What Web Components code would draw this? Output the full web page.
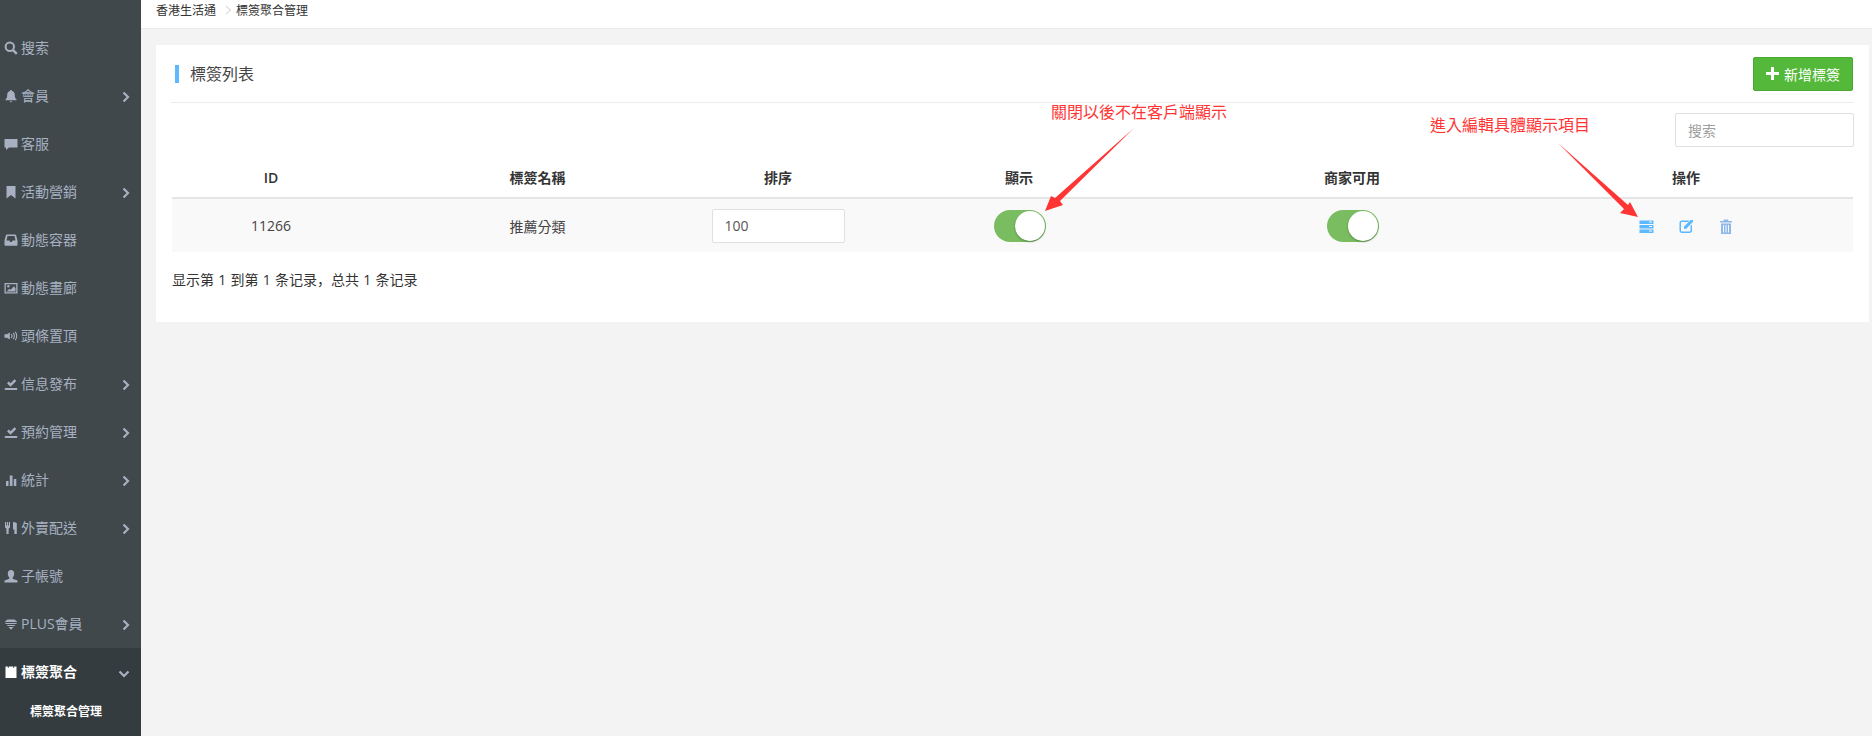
<!DOCTYPE html>
<html lang="zh-Hant">
<head>
<meta charset="utf-8">
<title>標簽聚合管理</title>
<style>
html, body { margin: 0; height: 100%; overflow: hidden; background: #f3f3f3; }
body { font-family: "Open Sans", "Noto Sans CJK TC", sans-serif; font-size: 14px; color: #333; }
</style>
</head>
<body>
<app-page>
	<side-nav slot="nav">
		<nav-item icon="search">搜索</nav-item>
		<nav-item icon="bell" more>會員</nav-item>
		<nav-item icon="comment">客服</nav-item>
		<nav-item icon="bookmark" more>活動營銷</nav-item>
		<nav-item icon="inbox">動態容器</nav-item>
		<nav-item icon="picture">動態畫廊</nav-item>
		<nav-item icon="volume">頭條置頂</nav-item>
		<nav-item icon="saved" more>信息發布</nav-item>
		<nav-item icon="saved" more>預約管理</nav-item>
		<nav-item icon="stats" more>統計</nav-item>
		<nav-item icon="cutlery" more>外賣配送</nav-item>
		<nav-item icon="user">子帳號</nav-item>
		<nav-item icon="diamond" more>PLUS會員</nav-item>
		<nav-group>
			<nav-item icon="page" open active>標簽聚合</nav-item>
			<nav-sub>標簽聚合管理</nav-sub>
		</nav-group>
	</side-nav>
	<bread-crumb slot="top"><span>香港生活通</span><span>標簽聚合管理</span></bread-crumb>
	<tag-card>
		<span slot="title">標簽列表</span>
		<add-button slot="action">新增標簽</add-button>
		<search-box placeholder="搜索"></search-box>
		<tag-table>
			<tag-row head>
				<span>ID</span><span>標簽名稱</span><span>排序</span><span>顯示</span><span>商家可用</span><span>操作</span>
			</tag-row>
			<tag-row>
				<span>11266</span>
				<span>推薦分類</span>
				<sort-input value="100"></sort-input>
				<on-switch></on-switch>
				<on-switch></on-switch>
				<row-actions></row-actions>
			</tag-row>
		</tag-table>
		<p slot="foot" lang="zh-CN">显示第 1 到第 1 条记录，总共 1 条记录</p>
	</tag-card>
	<call-out slot="over" x="1051" y="100" points="1134,128 1060,201 1063,205 1045,211 1051,196 1055,198">關閉以後不在客戶端顯示</call-out>
	<call-out slot="over" x="1430" y="113" points="1558,143 1628,205 1630,202 1638,217 1620,213 1624,209">進入編輯具體顯示項目</call-out>
</app-page>

<script>
// glyphicon look-alikes, all on a 14x14 box
const ICONS = {
	search: '<circle cx="5.8" cy="5.8" r="4.2" fill="none" stroke="currentColor" stroke-width="2"/><path d="M8.8 8.8l4 4" stroke="currentColor" stroke-width="2.4" fill="none"/>',
	bell: '<path d="M7 1c.7 0 1 .5 1 1 2 .5 2.800 2 2.800 4 0 2.500.7 3.500 1.700 4.500v.8h-11v-.8c1-1 1.700-2 1.700-4.500 0-2 .8-3.500 2.800-4 0-.5.3-1 1-1z"/><path d="M5.500 12.300h3L7 13.600z"/>',
	comment: '<path d="M.5 2h13v8.500H5L2 13v-2.500H.5z"/>',
	bookmark: '<path d="M2.500 1h9v12.500L7 10l-4.500 3.500z"/>',
	inbox: '<path fill-rule="evenodd" d="M3 1.500h8c.6 0 1 .3 1.200.9l1.300 5V12c0 .5-.4.800-.8.800H1.300c-.4 0-.8-.3-.8-.8V7.400l1.300-5c.2-.6.6-.9 1.200-.9zM3.500 3L2.500 7.500h3l.6 1.500h1.800l.6-1.500h3L10.500 3z"/>',
	picture: '<path fill-rule="evenodd" d="M.5 2h13v10.500H.5zM1.800 3.300v7.900h10.400V3.300z"/><circle cx="4.300" cy="5.300" r="1.200"/><path d="M2.500 10.500l3-2.700 1.300 1 3-3.500 1.700 2v3.200z"/>',
	volume: '<path d="M.5 5.300h2.300L5.800 3.500v7L2.800 8.700H.5z"/><path d="M7.300 5c.8 1.200.8 2.800 0 4M9.300 3.800c1.300 2 1.300 4.400 0 6.400M11.300 2.800c1.800 2.700 1.800 5.700 0 8.400" fill="none" stroke="currentColor" stroke-width="1.100"/>',
	saved: '<path d="M3 6.300l1.800-1.800L6.500 6.200l4-4 1.800 1.800-5.800 5.800z"/><path d="M.8 11h12.400v2H.8z"/>',
	stats: '<path d="M2 8h2.500v5H2zM5.800 2.500h2.700V13H5.800zM9.800 6h2.500v7H9.800z"/>',
	cutlery: '<path d="M1 1h1.100v3.500h.8V1H4v3.500h.8V1H6v5.500L4.700 7.500 4.600 13H2.500l-.1-5.500L1 6.500zM9 1c2 0 3.800 1.200 3.800 1.200V13h-2.400V8.500H9z"/>',
	user: '<path d="M7 1c2 0 3.200 1.500 3.200 3.500S9.300 8 8.600 8.700c0 .8.300 1.100 1.400 1.500 1.700.6 3 .8 3.500 1.500v1.800H.5v-1.800c.5-.7 1.800-.9 3.500-1.500 1.100-.4 1.400-.7 1.400-1.500C4.700 8 3.800 6.500 3.800 4.500S5 1 7 1z"/>',
	diamond: '<path d="M3.500 2.500h7L13.500 5H.5z"/><path d="M1 6h12l-.8 1H1.800zM2.800 8h8.400l-.8 1H3.600zM4.500 10h5L7 12.800z"/>',
	page: '<path d="M1.500 1.500h2.300v1.300h1V1.500h4.400v1.300h1V1.500h2.300v11.500H1.500z"/>'
};

const svgIcon = (name, size = 14) =>
	`<svg width="${size}" height="${size}" viewBox="0 0 14 14" fill="currentColor" aria-hidden="true">${ICONS[name]}</svg>`;

class AppPage extends HTMLElement {
	constructor() {
		super();
		this.attachShadow({mode: 'open'});
		this.shadowRoot.innerHTML = `
			<style>
			:host { display: flex; position: relative; width: 1872px; height: 736px; overflow: hidden; }
			.main { flex: 1; display: flex; flex-direction: column; min-width: 0; }
			.body { padding: 16px 3px 0 15px; }
			</style>
			<slot name="nav"></slot>
			<div class="main">
				<slot name="top"></slot>
				<div class="body"><slot></slot></div>
			</div>
			<slot name="over"></slot>
		`;
	}
}

class SideNav extends HTMLElement {
	constructor() {
		super();
		this.attachShadow({mode: 'open'});
		this.shadowRoot.innerHTML = `
			<style>
			:host { display: flex; flex-direction: column; flex: none; width: 141px; height: 736px; padding-top: 24px; box-sizing: border-box; background: #40484b; overflow: hidden; }
			</style>
			<slot></slot>
		`;
	}
}

class NavItem extends HTMLElement {
	constructor() {
		super();
		this.attachShadow({mode: 'open'});
	}
	connectedCallback() {
		const arrow = this.hasAttribute('open')
			? '<path d="M1.500 3.500L6 8l4.500-4.500" />'
			: '<path d="M3.500 1.500L8 6l-4.500 4.500" />';
		const showArrow = this.hasAttribute('more') || this.hasAttribute('open');
		this.shadowRoot.innerHTML = `
			<style>
			:host { display: flex; align-items: center; height: 48px; flex: none; padding: 0 0 2px 4px; box-sizing: border-box; color: #a7b1c2; font-size: 14px; position: relative; }
			:host([active]) { color: #fff; font-weight: 600; }
			svg.i { flex: none; margin: 2px 3px 0 0; }
			svg.a { position: absolute; right: 9px; top: 19px; fill: none; stroke: #a7b1c2; stroke-width: 2.200; }
			:host([open]) svg.a { right: 11px; top: 20px; }
			</style>
			${svgIcon(this.getAttribute('icon'), 14)}
			<slot></slot>
			${showArrow ? `<svg class="a" width="12" height="12" viewBox="0 0 12 12">${arrow}</svg>` : ''}
		`;
		this.shadowRoot.querySelector('svg').classList.add('i');
	}
}

class NavGroup extends HTMLElement {
	constructor() {
		super();
		this.attachShadow({mode: 'open'});
		this.shadowRoot.innerHTML = `
			<style>
			:host { display: block; background: #353c3f; flex: 1; }
			</style>
			<slot></slot>
		`;
	}
}

class NavSub extends HTMLElement {
	constructor() {
		super();
		this.attachShadow({mode: 'open'});
		this.shadowRoot.innerHTML = `
			<style>
			:host { display: block; padding-left: 30px; font-size: 12px; font-weight: 600; line-height: 32px; color: #fff; }
			</style>
			<slot></slot>
		`;
	}
}

class BreadCrumb extends HTMLElement {
	constructor() {
		super();
		this.attachShadow({mode: 'open'});
		this.shadowRoot.innerHTML = `
			<style>
			:host { display: flex; align-items: flex-start; height: 29px; padding: 2px 0 0 15px; box-sizing: border-box; background: #fff; border-bottom: 1px solid #ececec; font-size: 12px; line-height: 17px; color: #333; }
			svg { margin: 3px 4px 0 9px; fill: none; stroke: #c8c8c8; stroke-width: 1; }
			</style>
			<slot name="a"></slot>
			<svg width="7" height="10" viewBox="0 0 7 10"><path d="M1 1l4.500 4L1 9"/></svg>
			<slot name="b"></slot>
		`;
	}
	connectedCallback() {
		const parts = this.querySelectorAll('span');
		parts[0].slot = 'a';
		parts[1].slot = 'b';
	}
}

class TagCard extends HTMLElement {
	constructor() {
		super();
		this.attachShadow({mode: 'open'});
		this.shadowRoot.innerHTML = `
			<style>
			:host { display: block; background: #fff; padding: 0 15px; height: 277px; box-sizing: border-box; }
			header { display: flex; align-items: center; justify-content: space-between; height: 58px; box-sizing: border-box; border-bottom: 1px solid #ececec; padding: 0 1px 0 4px; }
			h2 { margin: 0; font-size: 16px; font-weight: 400; line-height: 18px; color: #444; border-left: 4px solid #5cb8ff; padding-left: 11px; }
			.tools { display: flex; justify-content: flex-end; padding: 10px 0 13px; }
			::slotted([slot="foot"]) { margin: 18px 0 0 1px; font-family: "Open Sans", "Noto Sans CJK SC", sans-serif; font-size: 14px; word-spacing: .6px; line-height: 20px; color: #333; }
			</style>
			<header>
				<h2><slot name="title"></slot></h2>
				<slot name="action"></slot>
			</header>
			<div class="tools"><slot name="tools"></slot></div>
			<slot></slot>
			<slot name="foot"></slot>
		`;
	}
	connectedCallback() {
		this.querySelector('search-box').slot = 'tools';
	}
}

class AddButton extends HTMLElement {
	constructor() {
		super();
		this.attachShadow({mode: 'open'});
		this.shadowRoot.innerHTML = `
			<style>
			:host { display: inline-flex; align-items: center; justify-content: center; gap: 5px; width: 100px; height: 34px; box-sizing: border-box; background: #54b93a; border: 1px solid #4aa833; border-radius: 2px; color: #fff; font-size: 14px; }
			svg { fill: #fff; }
			</style>
			<svg width="13" height="13" viewBox="0 0 13 13"><path d="M5 0h3v5h5v3H8v5H5V8H0V5h5z"/></svg>
			<slot></slot>
		`;
	}
}

class SearchBox extends HTMLElement {
	constructor() {
		super();
		this.attachShadow({mode: 'open'});
	}
	connectedCallback() {
		this.shadowRoot.innerHTML = `
			<style>
			:host { display: block; width: 179px; height: 34px; }
			input { width: 100%; height: 100%; box-sizing: border-box; border: 1px solid #e0e0e0; border-radius: 2px; padding: 0 12px; font: 14px "Open Sans", "Noto Sans CJK TC", sans-serif; outline: none; background: #fff; }
			input::placeholder { color: #a0a0a0; opacity: 1; }
			</style>
			<input type="text" placeholder="${this.getAttribute('placeholder')}">
		`;
	}
}

class TagTable extends HTMLElement {
	constructor() {
		super();
		this.attachShadow({mode: 'open'});
		this.shadowRoot.innerHTML = `
			<style>
			:host { display: block; margin-left: 1px; margin-right: 1px; --cols: 198px 333px 150px 332px 334px 1fr; }
			</style>
			<slot></slot>
		`;
	}
}

class TagRow extends HTMLElement {
	constructor() {
		super();
		this.attachShadow({mode: 'open'});
		this.shadowRoot.innerHTML = `
			<style>
			:host { display: grid; grid-template-columns: var(--cols); align-items: center; justify-items: center; height: 53px; background: #f9f9f9; font-size: 14px; color: #444; }
			:host([head]) { height: 39px; padding-bottom: 3px; background: #fff; border-bottom: 2px solid #e4e4e4; box-sizing: border-box; font-weight: 600; color: #333; }
			::slotted(:nth-child(2)) { margin-left: 2px; }
			</style>
			<slot></slot>
		`;
	}
}

class SortInput extends HTMLElement {
	constructor() {
		super();
		this.attachShadow({mode: 'open'});
	}
	connectedCallback() {
		this.shadowRoot.innerHTML = `
			<style>
			:host { display: block; width: 133px; height: 34px; }
			input { width: 100%; height: 100%; box-sizing: border-box; border: 1px solid #e0e0e0; border-radius: 2px; padding: 0 12px; font: 14px "Open Sans", "Noto Sans CJK TC", sans-serif; color: #555; outline: none; background: #fff; }
			</style>
			<input type="text" value="${this.getAttribute('value')}">
		`;
	}
}

class OnSwitch extends HTMLElement {
	constructor() {
		super();
		this.attachShadow({mode: 'open'});
		this.shadowRoot.innerHTML = `
			<style>
			:host { display: block; width: 52px; height: 32px; margin-left: 2px; position: relative; border-radius: 16px; background: #79bd60; }
			i { position: absolute; top: 1px; right: 1px; width: 30px; height: 30px; border-radius: 50%; background: #fff; box-shadow: 0 1px 2px rgba(0,0,0,.3); }
			</style>
			<i></i>
		`;
	}
}

class RowActions extends HTMLElement {
	constructor() {
		super();
		this.attachShadow({mode: 'open'});
		this.shadowRoot.innerHTML = `
			<style>
			:host { display: flex; gap: 25px; align-items: center; margin-top: 2px; color: #5cb8ff; }
			svg { display: block; fill: currentColor; }
			.trash { color: #8fb8ea; }
			</style>
			<svg width="15" height="14" viewBox="0 0 15 14"><path fill-rule="evenodd" d="M.5.500h14v3.600H.5zM10 1.500v1h3v-1zM.5 5h14v3.600H.5zM10 6v1h3V6zM.5 9.500h14v3.600H.5zM10 10.500v1h3v-1z"/></svg>
			<svg width="15" height="15" viewBox="0 0 15 15"><path d="M3 1.500h7.500L9 3H3c-.6 0-1 .4-1 1v7.500c0 .6.400 1 1 1h7.500c.6 0 1-.4 1-1V7l1.500-1.500v6.300c0 1.200-1 2.200-2.200 2.200H2.700C1.500 14 .5 13 .5 11.800V3.700C.5 2.500 1.500 1.500 3 1.500z"/><path d="M5 7.500L11.700 1 14 1 14 2.800 7.300 9.700 5 10z"/></svg>
			<svg class="trash" width="14" height="16" viewBox="0 0 14 16"><path d="M5 .5h4l.5 1.500H13v1.500H1V2h3.500zM2 4.500h10V15H2zM4 6v7.500h1V6zM6.500 6v7.500h1V6zM9 6v7.500h1V6z" fill-rule="evenodd"/></svg>
		`;
	}
}

class CallOut extends HTMLElement {
	constructor() {
		super();
		this.attachShadow({mode: 'open'});
	}
	connectedCallback() {
		this.shadowRoot.innerHTML = `
			<style>
			:host { display: block; position: absolute; left: 0; top: 0; width: 0; height: 0; }
			.label { position: absolute; left: ${this.getAttribute('x')}px; top: ${this.getAttribute('y')}px; white-space: nowrap; font-size: 16px; line-height: 24px; color: #ff3535; }
			svg { position: absolute; left: 0; top: 0; pointer-events: none; }
			polygon { fill: #ff3535; }
			</style>
			<div class="label"><slot></slot></div>
			<svg width="1872" height="736"><polygon points="${this.getAttribute('points')}"/></svg>
		`;
	}
}

customElements.define('app-page', AppPage);
customElements.define('side-nav', SideNav);
customElements.define('nav-item', NavItem);
customElements.define('nav-group', NavGroup);
customElements.define('nav-sub', NavSub);
customElements.define('bread-crumb', BreadCrumb);
customElements.define('tag-card', TagCard);
customElements.define('add-button', AddButton);
customElements.define('search-box', SearchBox);
customElements.define('tag-table', TagTable);
customElements.define('tag-row', TagRow);
customElements.define('sort-input', SortInput);
customElements.define('on-switch', OnSwitch);
customElements.define('row-actions', RowActions);
customElements.define('call-out', CallOut);
</script>
</body>
</html>
